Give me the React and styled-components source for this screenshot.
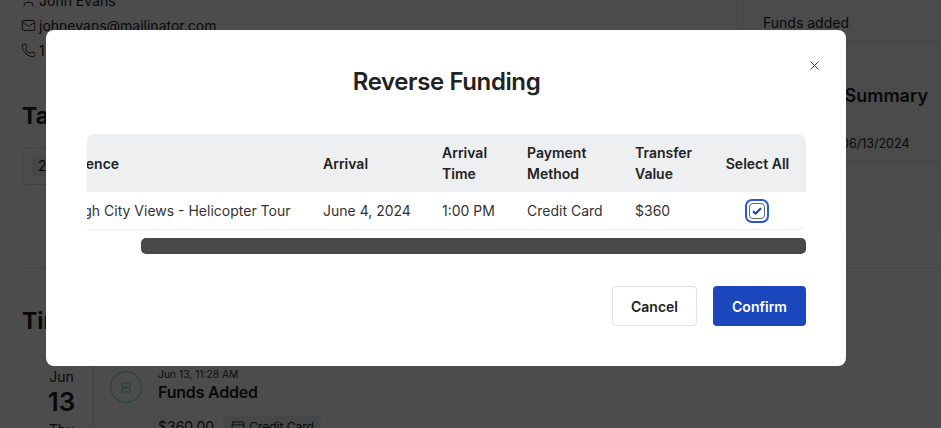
import React, { useLayoutEffect, useRef } from "react";
import styled, { createGlobalStyle } from "styled-components";
import { User, Mail, Phone, X, CreditCard } from "lucide-react";

const Global = createGlobalStyle`
  html, body {
    margin: 0;
    height: 100%;
    overflow: hidden;
    background: #fff;
    font-family: Inter, "Liberation Sans", sans-serif;
    color: #222;
  }
  * {
    box-sizing: border-box;
  }
`;

const rows = [
  {
    experience: "Sky High City Views - Helicopter Tour",
    arrival: "June 4, 2024",
    time: "1:00 PM",
    method: "Credit Card",
    value: "$360",
  },
];

const App = () => {
  const scroller = useRef(null);

  // the table is shown scrolled a little to the right
  useLayoutEffect(() => {
    scroller.current.scrollLeft = 58;
  }, []);

  return (
    <>
      <Global />
      <Page>
        <TopRow>
          <Main>
            <Contact>
              <ContactRow>
                <User size={15} strokeWidth={1.5} /> John Evans
              </ContactRow>
              <ContactRow>
                <Mail size={15} strokeWidth={1.5} /> johnevans@mailinator.com
              </ContactRow>
              <ContactRow>
                <Phone size={15} strokeWidth={1.5} /> 1 (555) 010-2030
              </ContactRow>
            </Contact>
            <SectionTitle>Tasks</SectionTitle>
            <TaskBox>
              <TaskCount>2</TaskCount>
            </TaskBox>
          </Main>
          <Side>
            <SideRow>Funds added</SideRow>
            <SideTitle>Transaction Summary</SideTitle>
            <SideDate>06/13/2024</SideDate>
          </Side>
        </TopRow>
        <Divider />
        <SectionTitle $top={38}>Timeline</SectionTitle>
        <Timeline>
          <DateCol>
            <span>Jun</span>
            <DateNum>13</DateNum>
            <DateDay>Thu</DateDay>
          </DateCol>
          <EventIcon>
            <svg width="12" height="11" viewBox="0 0 12 11" fill="none" stroke="#5fe3ae">
              <rect x="1.5" y="1" width="9" height="4" rx="1.6" />
              <rect x="1.5" y="6" width="9" height="4" rx="1.6" />
            </svg>
          </EventIcon>
          <EventBody>
            <EventTime>Jun 13, 11:28 AM</EventTime>
            <EventTitle>Funds Added</EventTitle>
            <EventMeta>
              $360.00
              <Chip>
                <CreditCard size={14} strokeWidth={1.5} /> Credit Card
              </Chip>
            </EventMeta>
          </EventBody>
        </Timeline>
      </Page>

      <Overlay>
        <Modal>
          <CloseButton aria-label="Close">
            <X size={15} strokeWidth={1.5} />
          </CloseButton>
          <Title>Reverse Funding</Title>
          <TableScroll ref={scroller}>
            <Table>
              <thead>
                <tr>
                  <Th $width={278}>Experience</Th>
                  <Th $width={119}>Arrival</Th>
                  <Th $width={85}>Arrival Time</Th>
                  <Th $width={108}>Payment Method</Th>
                  <Th $width={90}>Transfer Value</Th>
                  <Th $width={97} $center>
                    Select All
                  </Th>
                </tr>
              </thead>
              <tbody>
                {rows.map((row) => (
                  <tr key={row.experience}>
                    <Td>{row.experience}</Td>
                    <Td>{row.arrival}</Td>
                    <Td>{row.time}</Td>
                    <Td>{row.method}</Td>
                    <Td>{row.value}</Td>
                    <Td $center>
                      <CheckRing>
                        <CheckBox>
                          <svg width="10" height="8" viewBox="0 0 10 8" fill="none">
                            <path
                              d="M1 4.2 3.6 6.6 9 1.2"
                              stroke="#1d3f9e"
                              strokeWidth="2"
                            />
                          </svg>
                        </CheckBox>
                      </CheckRing>
                    </Td>
                  </tr>
                ))}
              </tbody>
            </Table>
          </TableScroll>
          <ScrollTrack>
            <ScrollThumb />
          </ScrollTrack>
          <Actions>
            <CancelButton>Cancel</CancelButton>
            <ConfirmButton>Confirm</ConfirmButton>
          </Actions>
        </Modal>
      </Overlay>
    </>
  );
};

const Page = styled.div`
  height: 428px;
  overflow: hidden;
`;

const TopRow = styled.div`
  display: flex;
  height: 267px;
`;

const Main = styled.div`
  flex: 1;
  min-width: 0;
  margin-top: -10px;
`;

const Contact = styled.div`
  display: flex;
  flex-direction: column;
  gap: 4px;
  padding-left: 21px;
`;

const ContactRow = styled.div`
  display: flex;
  align-items: center;
  gap: 3px;
  height: 21px;
  font-size: 14px;
`;

const SectionTitle = styled.h2`
  margin: ${(p) => p.$top || 40}px 0 0 22px;
  font-size: 23px;
  line-height: 30px;
  font-weight: 700;
`;

const TaskBox = styled.div`
  display: flex;
  align-items: center;
  width: 200px;
  height: 38px;
  margin: 16px 0 0 22px;
  padding-left: 9px;
  border: 1px solid #dfe1e6;
  border-radius: 4px;
`;

const TaskCount = styled.span`
  width: 22px;
  padding-left: 6px;
  font-size: 14px;
  line-height: 20px;
  background: #eceef1;
`;

const Divider = styled.hr`
  margin: 0 0 0 22px;
  border: 0;
  border-top: 1px solid #dfe1e6;
`;

const Timeline = styled.div`
  display: flex;
  margin-top: 15px;
  padding-left: 30px;
`;

const DateCol = styled.div`
  display: flex;
  flex-direction: column;
  align-items: center;
  width: 64px;
  padding-top: 17px;
  border-right: 1px solid #dfe1e6;
  font-size: 14px;
  line-height: 17px;
`;

const DateNum = styled.span`
  font-size: 26px;
  line-height: 34px;
  font-weight: 600;
`;

const DateDay = styled.span`
  margin-top: 2px;
`;

const EventIcon = styled.span`
  display: flex;
  align-items: center;
  justify-content: center;
  flex: none;
  width: 32px;
  height: 32px;
  margin: 20px 16px 0 16px;
  border: 1px solid #5fe3ae;
  border-radius: 50%;
`;

const EventBody = styled.div`
  padding-top: 17px;
`;

const EventTime = styled.div`
  font-size: 10.3px;
  line-height: 12px;
  color: #333;
`;

const EventTitle = styled.div`
  font-size: 16px;
  line-height: 24px;
  font-weight: 600;
  letter-spacing: -0.2px;
`;

const EventMeta = styled.div`
  display: flex;
  align-items: center;
  gap: 9px;
  margin-top: 12px;
  font-size: 14px;
`;

const Chip = styled.span`
  display: inline-flex;
  align-items: center;
  gap: 4px;
  width: 98px;
  height: 20px;
  padding-left: 8px;
  font-size: 12px;
  background: #eceef1;
  border-radius: 4px;
`;

const Side = styled.aside`
  flex: none;
  width: 205px;
  height: 228px;
  background: #fbfbfc;
  border-left: 1px solid #eceef1;
`;

const SideRow = styled.div`
  padding: 14px 0 8px 26px;
  font-size: 14px;
  line-height: 18px;
  border-bottom: 1px solid #e6e7ea;
`;

const SideTitle = styled.h3`
  margin: 41px 0 0;
  padding-right: 15px;
  font-size: 18px;
  line-height: 28px;
  font-weight: 600;
  text-align: right;
  white-space: nowrap;
`;

const SideDate = styled.div`
  margin-top: 25px;
  padding: 0 0 8px 104px;
  font-size: 12.5px;
  line-height: 18px;
  border-bottom: 1px solid #e6e7ea;
`;

const Overlay = styled.div`
  position: fixed;
  inset: 0;
  display: flex;
  align-items: flex-start;
  padding: 30px 0 0 46px;
  background: rgba(0, 0, 0, 0.7);
`;

const Modal = styled.div`
  position: relative;
  width: 800px;
  height: 336px;
  padding: 36px 40px 0 41px;
  background: #fff;
  border-radius: 8px;
`;

const CloseButton = styled.button`
  position: absolute;
  top: 28px;
  right: 24px;
  display: flex;
  padding: 0;
  color: #333;
  background: none;
  border: 0;
`;

const Title = styled.h2`
  margin: 0 0 36px;
  font-size: 24px;
  line-height: 32px;
  font-weight: 600;
  letter-spacing: -0.4px;
  text-align: center;
`;

const TableScroll = styled.div`
  overflow: hidden;
  border-radius: 8px 8px 0 0;
`;

const Table = styled.table`
  width: 777px;
  border-collapse: separate;
  border-spacing: 0;
  table-layout: fixed;
`;

const Th = styled.th`
  width: ${(p) => p.$width}px;
  height: 58px;
  padding: 0 16px;
  font-size: 14px;
  line-height: 21px;
  font-weight: 600;
  text-align: ${(p) => (p.$center ? "center" : "left")};
  background: #eeeff1;

  &:first-child {
    padding-left: 14px;
  }
  &:last-child {
    border-top-right-radius: 8px;
  }
`;

const Td = styled.td`
  height: 38px;
  padding: 0 16px;
  font-size: 14px;
  color: #333;
  white-space: nowrap;
  text-align: ${(p) => (p.$center ? "center" : "left")};
  border-bottom: 1px solid #ebecef;

  &:first-child {
    padding-left: 12px;
  }
  &:last-child {
    border-bottom-right-radius: 8px;
  }
`;

const CheckRing = styled.span`
  display: inline-flex;
  align-items: center;
  justify-content: center;
  width: 24px;
  height: 24px;
  margin-right: 1px;
  vertical-align: middle;
  border: 2px solid #2658d8;
  border-radius: 7px;
`;

const CheckBox = styled.span`
  display: flex;
  align-items: center;
  justify-content: center;
  width: 16px;
  height: 16px;
  border: 1px solid #5e6470;
  border-radius: 4px;
`;

const ScrollTrack = styled.div`
  margin-top: 8px;
  padding-left: 54px;
`;

const ScrollThumb = styled.div`
  height: 16px;
  background: #48494b;
  border-radius: 5px;
`;

const Actions = styled.div`
  display: flex;
  justify-content: flex-end;
  gap: 16px;
  margin-top: 32px;
`;

const CancelButton = styled.button`
  width: 85px;
  height: 40px;
  font: 600 14px Inter, sans-serif;
  color: #222;
  background: #fff;
  border: 1px solid #e0e2e7;
  border-radius: 4px;
`;

const ConfirmButton = styled.button`
  width: 93px;
  height: 40px;
  font: 600 14px Inter, sans-serif;
  color: #fff;
  background: #1a47bc;
  border: 0;
  border-radius: 4px;
`;

export default App;
